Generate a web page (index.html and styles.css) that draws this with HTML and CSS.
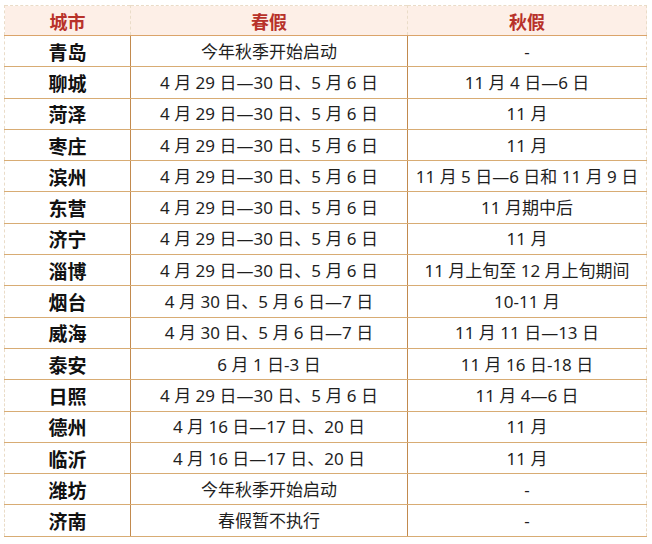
FILE: index.html
```html
<!DOCTYPE html>
<html lang="zh">
<head>
<meta charset="utf-8">
<link rel="stylesheet" href="styles.css">
</head>
<body>
<table class="holidays">
  <thead>
    <tr><th class="c1">城市</th><th class="c2">春假</th><th class="c3">秋假</th></tr>
  </thead>
  <tbody>
    <tr><td class="city">青岛</td><td>今年秋季开始启动</td><td>-</td></tr>
    <tr><td class="city">聊城</td><td>4 月 29 日—30 日、5 月 6 日</td><td>11 月 4 日—6 日</td></tr>
    <tr><td class="city">菏泽</td><td>4 月 29 日—30 日、5 月 6 日</td><td>11 月</td></tr>
    <tr><td class="city">枣庄</td><td>4 月 29 日—30 日、5 月 6 日</td><td>11 月</td></tr>
    <tr><td class="city">滨州</td><td>4 月 29 日—30 日、5 月 6 日</td><td>11 月 5 日—6 日和 11 月 9 日</td></tr>
    <tr><td class="city">东营</td><td>4 月 29 日—30 日、5 月 6 日</td><td>11 月期中后</td></tr>
    <tr><td class="city">济宁</td><td>4 月 29 日—30 日、5 月 6 日</td><td>11 月</td></tr>
    <tr><td class="city">淄博</td><td>4 月 29 日—30 日、5 月 6 日</td><td>11 月上旬至 12 月上旬期间</td></tr>
    <tr><td class="city">烟台</td><td>4 月 30 日、5 月 6 日—7 日</td><td>10-11 月</td></tr>
    <tr><td class="city">威海</td><td>4 月 30 日、5 月 6 日—7 日</td><td>11 月 11 日—13 日</td></tr>
    <tr><td class="city">泰安</td><td>6 月 1 日-3 日</td><td>11 月 16 日-18 日</td></tr>
    <tr><td class="city">日照</td><td>4 月 29 日—30 日、5 月 6 日</td><td>11 月 4—6 日</td></tr>
    <tr><td class="city">德州</td><td>4 月 16 日—17 日、20 日</td><td>11 月</td></tr>
    <tr><td class="city">临沂</td><td>4 月 16 日—17 日、20 日</td><td>11 月</td></tr>
    <tr><td class="city">潍坊</td><td>今年秋季开始启动</td><td>-</td></tr>
    <tr><td class="city">济南</td><td>春假暂不执行</td><td>-</td></tr>
  </tbody>
</table>
</body>
</html>
```
FILE: styles.css
```css
html, body {
  margin: 0;
  padding: 0;
  background: #ffffff;
}

body {
  padding: 5px 0 0 4px;
  font-family: "Noto Sans", "Noto Sans CJK SC", sans-serif;
  color: #1f1f1f;
}

.holidays {
  border-collapse: collapse;
  table-layout: fixed;
  width: 643px;
  border-top: 1px dashed #eadcc8;
  border-left: 1px dashed #eadcc8;
  border-right: 1px dashed #eadcc8;
}

.holidays th {
  height: 29px;
  padding: 0;
  background: #fdefe7;
  color: #b8322a;
  font-family: "Noto Sans CJK SC", sans-serif;
  font-size: 18px;
  font-weight: bold;
  text-align: center;
  vertical-align: middle;
  border-bottom: 1px solid #dba46a;
  border-left: 1px dashed #eadcc8;
  line-height: 1;
}

.holidays .c1 { width: 125px; }
.holidays .c2 { width: 276px; }
.holidays .c3 { width: auto; }

.holidays td {
  height: 30.3px;
  padding: 0;
  text-align: center;
  vertical-align: middle;
  font-size: 17px;
  line-height: 1;
  border-bottom: 1px solid #d8ac74;
  border-left: 1px solid #c28a4e;
  white-space: nowrap;
}

.holidays td:first-child,
.holidays th:first-child {
  border-left: 1px dashed #eadcc8;
}

.holidays td.city {
  font-family: "Noto Sans CJK SC", sans-serif;
  font-size: 19px;
  font-weight: bold;
  color: #111;
}
```
